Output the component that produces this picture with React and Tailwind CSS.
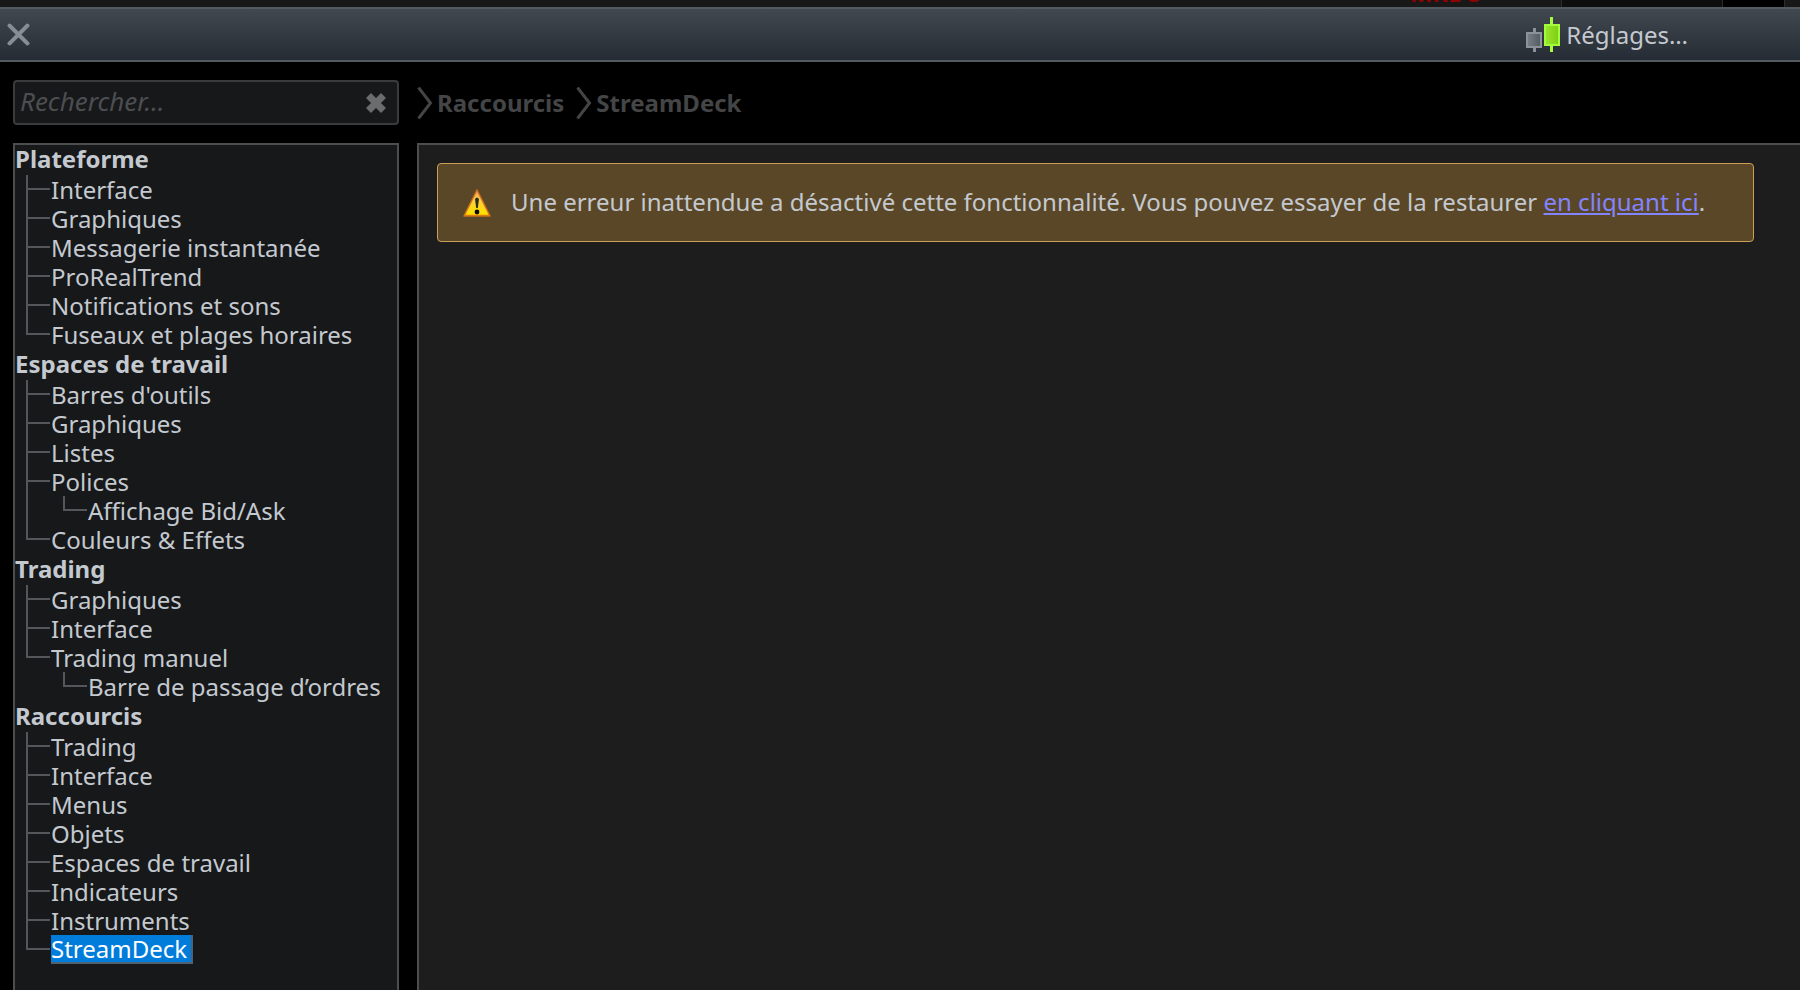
const tree = [
  {
    title: 'Plateforme',
    items: [
      { label: 'Interface' },
      { label: 'Graphiques' },
      { label: 'Messagerie instantanée' },
      { label: 'ProRealTrend' },
      { label: 'Notifications et sons' },
      { label: 'Fuseaux et plages horaires' },
    ],
  },
  {
    title: 'Espaces de travail',
    items: [
      { label: "Barres d'outils" },
      { label: 'Graphiques' },
      { label: 'Listes' },
      { label: 'Polices', child: 'Affichage Bid/Ask' },
      { label: 'Couleurs & Effets' },
    ],
  },
  {
    title: 'Trading',
    items: [
      { label: 'Graphiques' },
      { label: 'Interface' },
      { label: 'Trading manuel', child: 'Barre de passage d’ordres' },
    ],
  },
  {
    title: 'Raccourcis',
    items: [
      { label: 'Trading' },
      { label: 'Interface' },
      { label: 'Menus' },
      { label: 'Objets' },
      { label: 'Espaces de travail' },
      { label: 'Indicateurs' },
      { label: 'Instruments' },
      { label: 'StreamDeck', selected: true },
    ],
  },
];

// The last item draws its own elbow, the others share the vertical line of the list
function TreeItem({ item, last }) {
  return (
    <li className={last ? 'pl-[11px]' : 'ml-[11px] border-l-2 border-[#54565a]'}>
      <div className="flex h-[29px] gap-px">
        <span
          className={
            last
              ? 'h-[15px] w-[24px] border-b-2 border-l-2 border-[#54565a]'
              : 'h-[15px] w-[22px] border-b-2 border-[#54565a]'
          }
        ></span>
        <button
          className={
            item.selected
              ? 'border-r-2 border-b-2 border-[#4f6070] bg-[#007ddb] pr-1 leading-[27px] text-white'
              : 'leading-[28px]'
          }
        >
          {item.label}
        </button>
      </div>
      {item.child && (
        <div className={last ? 'ml-[37px] flex h-[29px] gap-px' : 'ml-[35px] flex h-[29px] gap-px'}>
          <span className="h-[15px] w-[24px] border-b-2 border-l-2 border-[#54565a]"></span>
          <button className="leading-[28px]">{item.child}</button>
        </div>
      )}
    </li>
  );
}

function Crumb({ children }) {
  return (
    <li className="flex items-center gap-1">
      <svg width="16" height="32" viewBox="0 0 16 32" fill="none" stroke="#444546" strokeWidth="3">
        <path d="M1.5 0.5 L13.5 16 L1.5 31.5" />
      </svg>
      {children}
    </li>
  );
}

function WarningIcon() {
  return (
    <svg width="28" height="28" viewBox="0 0 28 28" className="shrink-0">
      <defs>
        <linearGradient id="warn" x1="0" y1="0" x2="0" y2="1">
          <stop offset="0" stopColor="#f0a070" />
          <stop offset="0.4" stopColor="#fbd03a" />
          <stop offset="0.9" stopColor="#ffe000" />
          <stop offset="1" stopColor="#f09a00" />
        </linearGradient>
      </defs>
      <path d="M14 1 L27 27 H1 Z" fill="url(#warn)" stroke="#d0701a" strokeWidth="1.5" strokeLinejoin="round" />
      <path d="M12 10 Q14 7 16 10 L14.8 19 H13.2 Z" fill="#2c2c20" />
      <circle cx="14" cy="23" r="2.4" fill="#0c0c08" />
    </svg>
  );
}

export default function App() {
  return (
    <div className="flex min-h-screen flex-col bg-black font-['Noto_Sans',sans-serif] text-[24px] text-[#c4c9cf]">
      {/* Bottom edge of the window behind */}
      <div className="flex h-[7px] overflow-hidden" aria-hidden="true">
        <div className="flex flex-1 items-end justify-end bg-[#181818] pr-20 pb-0.5 leading-none font-bold text-[#8c0303]">
          MRE S
        </div>
        <div className="w-[162px] border-x border-[#2c2c2c] bg-[#0e0e0e]"></div>
        <div className="w-[61px] bg-black"></div>
        <div className="w-4 border-l border-[#2c2c2c] bg-[#181818]"></div>
      </div>

      <header className="flex h-[55px] items-center justify-between border-y-2 border-[#535b61] bg-linear-to-b from-[#41484f] to-[#262c35] pr-28 pl-[7px]">
        <button aria-label="Fermer">
          <svg width="23" height="23" viewBox="0 0 22 22" stroke="#878d94" strokeWidth="4" strokeLinecap="round">
            <path d="M2.5 2.5 L19.5 19.5 M19.5 2.5 L2.5 19.5" />
          </svg>
        </button>
        <h1 className="flex items-center gap-1.5">
          <svg width="34" height="36" viewBox="0 0 34 36">
            <defs>
              <linearGradient id="grey" x1="0" x2="1">
                <stop offset="0" stopColor="#7b8188" />
                <stop offset="1" stopColor="#535960" />
              </linearGradient>
              <linearGradient id="green" x1="0" x2="1">
                <stop offset="0" stopColor="#9be82c" />
                <stop offset="1" stopColor="#7ccd14" />
              </linearGradient>
            </defs>
            <path d="M8.5 11 V35" stroke="#8b9299" strokeWidth="3" />
            <rect x="1" y="16" width="14" height="14" fill="url(#grey)" stroke="#8b9299" strokeWidth="2" />
            <path d="M25.5 0 V35" stroke="#a4fb3b" strokeWidth="3" />
            <rect x="19" y="8" width="14" height="20" fill="url(#green)" stroke="#a4fb3b" strokeWidth="2" />
          </svg>
          Réglages…
        </h1>
      </header>

      <div className="flex flex-1 gap-[18px] pt-[18px] pl-[13px]">
        <div className="flex w-[386px] shrink-0 flex-col gap-[18px]">
          <div className="flex h-[45px] items-center rounded-[4px] border-2 border-[#3a3b3c] bg-[#17181a] pr-[10px] pl-[5px]">
            <input
              type="text"
              aria-label="Rechercher"
              placeholder="Rechercher…"
              className="min-w-0 flex-1 bg-transparent pb-0.5 text-[26px] italic outline-none placeholder:text-[#4c4e51]"
            />
            <button aria-label="Effacer">
              <svg width="22" height="22" viewBox="0 0 22 22" stroke="#6b6c6d" strokeWidth="7">
                <path d="M3.5 3.5 L18.5 18.5 M18.5 3.5 L3.5 18.5" />
              </svg>
            </button>
          </div>

          <nav className="flex flex-1 flex-col gap-px border-2 border-b-0 border-[#4c4d4e] bg-[#17181a] whitespace-nowrap">
            {tree.map((group) => (
              <section key={group.title}>
                <h2 className="h-[30px] leading-[28px] font-bold">{group.title}</h2>
                <ul>
                  {group.items.map((item, i) => (
                    <TreeItem key={item.label} item={item} last={i === group.items.length - 1} />
                  ))}
                </ul>
              </section>
            ))}
          </nav>
        </div>

        <main className="flex min-w-0 flex-1 flex-col gap-[18px]">
          <ol className="flex h-[45px] items-center gap-3 font-bold text-[#444546]">
            <Crumb>Raccourcis</Crumb>
            <Crumb>StreamDeck</Crumb>
          </ol>
          <div className="flex-1 border-t-2 border-l-2 border-[#4c4d4e] bg-[#1d1d1d] pt-[18px] pr-[46px] pl-[18px]">
            <div className="flex h-[79px] items-center gap-5 rounded-[4px] border border-[#c9a055] bg-[#5a4728] px-[25px] whitespace-nowrap">
              <WarningIcon />
              <p className="pb-0.5">
                Une erreur inattendue a désactivé cette fonctionnalité. Vous pouvez essayer de la restaurer{' '}
                <a href="#" className="text-[#8384ff] underline">
                  en cliquant ici
                </a>
                .
              </p>
            </div>
          </div>
        </main>
      </div>
    </div>
  );
}
